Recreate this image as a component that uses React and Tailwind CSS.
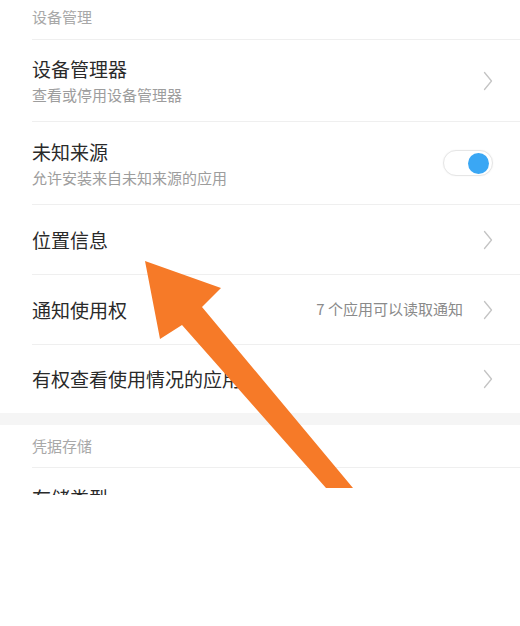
import React from 'react';

const Chevron = () => (
  <svg width="10" height="20" viewBox="0 0 10 20" fill="none" className="shrink-0">
    <path d="M1.5 1.5L8.5 10L1.5 18.5" stroke="#c4c4c4" strokeWidth="1.3" strokeLinecap="round" strokeLinejoin="round" />
  </svg>
);

const Toggle = () => (
  <div className="w-[50px] h-[26px] rounded-full border border-[#e6e6e6] bg-white flex items-center justify-end pr-[3px] shadow-[0_0_2px_rgba(0,0,0,0.05)]">
    <div className="w-[21px] h-[21px] rounded-full bg-[#3aa7f4]" />
  </div>
);

const SectionHeader = ({ title, className = '' }) => (
  <div className={`ml-[32px] flex items-center border-b border-[#efefef] text-[15px] text-[#a8a8a8] ${className}`}>
    {title}
  </div>
);

const Row = ({ title, subtitle, right, height, border = true }) => (
  <div
    className={`ml-[32px] pr-[27px] flex items-center justify-between ${height} ${border ? 'border-b border-[#efefef]' : ''}`}
  >
    <div className="flex flex-col">
      <span className="text-[19px] leading-[26px] text-[#2a2a2a]">{title}</span>
      {subtitle && (
        <span className="text-[15px] leading-[20px] mt-[3px] text-[#9d9d9d]">{subtitle}</span>
      )}
    </div>
    {right}
  </div>
);

const App = () => {
  return (
    <div className="w-full min-h-[626px] bg-white font-['Noto_Sans_CJK_SC','Noto_Sans',sans-serif]">
      {/* screenshot is cut off partway through the last row */}
      <div className="relative h-[495px] overflow-hidden">
        <SectionHeader title="设备管理" className="h-[40px] pb-[4px]" />
        <Row
          title="设备管理器"
          subtitle="查看或停用设备管理器"
          height="h-[82px]"
          right={<Chevron />}
        />
        <Row
          title="未知来源"
          subtitle="允许安装来自未知来源的应用"
          height="h-[83px]"
          right={<Toggle />}
        />
        <Row title="位置信息" height="h-[70px]" right={<Chevron />} />
        <Row
          title="通知使用权"
          height="h-[70px]"
          right={
            <div className="flex items-center gap-[20px]">
              <span className="text-[15px] text-[#8a8a8a]">7 个应用可以读取通知</span>
              <Chevron />
            </div>
          }
        />
        <Row title="有权查看使用情况的应用" height="h-[68px]" border={false} right={<Chevron />} />
        <div className="h-[12px] bg-[#f5f5f5]" />
        <SectionHeader title="凭据存储" className="h-[43px]" />
        <Row title="存储类型" height="h-[60px]" border={false} />

        <svg className="absolute inset-0 pointer-events-none" width="520" height="495" viewBox="0 0 520 495">
          <polygon
            points="145,261 221,288 202,307 353,488 326,488 182,325 160,339"
            fill="#f67a28"
          />
        </svg>
      </div>
    </div>
  );
};

export default App;
